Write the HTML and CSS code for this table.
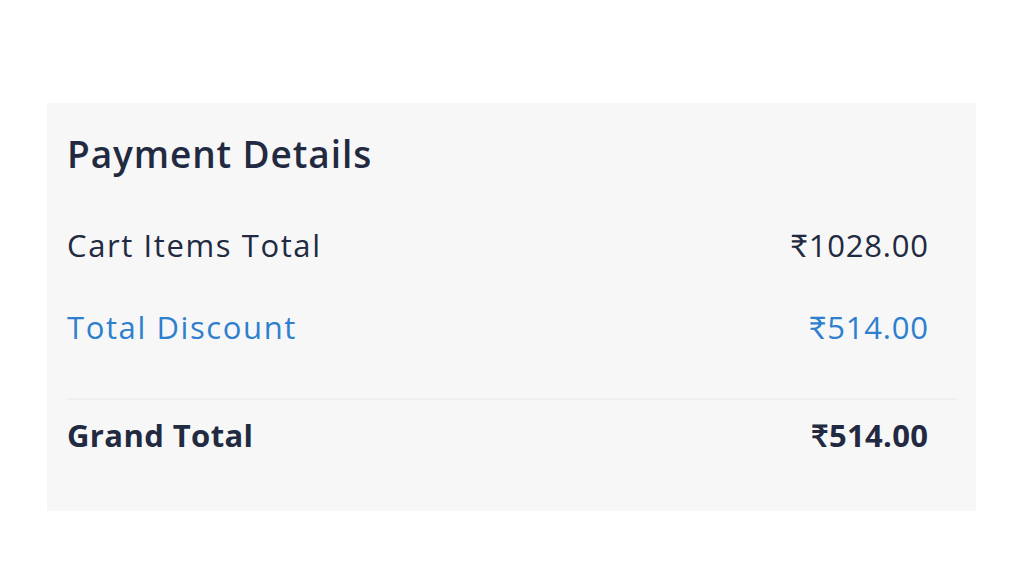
FILE: index.html
```html
<!DOCTYPE html>
<html>
<head>
<meta charset="utf-8">
<link rel="stylesheet" href="styles.css">
</head>
<body>
<div class="card">
  <h2 class="title">Payment Details</h2>
  <div class="row cart"><span class="label">Cart Items Total</span><span class="amt">₹1028.00</span></div>
  <div class="row discount"><span class="label">Total Discount</span><span class="amt">₹514.00</span></div>
  <div class="divider"></div>
  <div class="row grand"><span class="label">Grand Total</span><span class="amt">₹514.00</span></div>
</div>
</body>
</html>
```
FILE: styles.css
```css
html, body { margin: 0; padding: 0; background: #fff; }
body { font-family: "Open Sans", Lato, sans-serif; color: #222a41; }
.card {
  margin: 103px 0 0 47px;
  width: 929px;
  height: 408px;
  box-sizing: border-box;
  background: #f7f7f7;
  padding: 27px 19px 0 20px;
  display: flex;
  flex-direction: column;
}
.title {
  margin: 0;
  font-size: 37px;
  font-weight: 600;
  line-height: 48px;
  letter-spacing: 0.9px;
}
.row {
  display: flex;
  justify-content: space-between;
  padding-right: 29px;
  font-size: 31px;
  line-height: 40px;
}
.label { letter-spacing: 1.6px; }
.amt { letter-spacing: 0.8px; margin-right: -0.8px; }
.cart { margin-top: 47px; }
.discount { margin-top: 42px; color: #2f7fcf; }
.divider { height: 2px; background: #efefef; margin-top: 51px; }
.grand { margin-top: 15px; font-weight: 700; }
.grand .label { letter-spacing: 0.4px; }
.grand .amt { letter-spacing: 0.3px; margin-right: -0.3px; }
```
